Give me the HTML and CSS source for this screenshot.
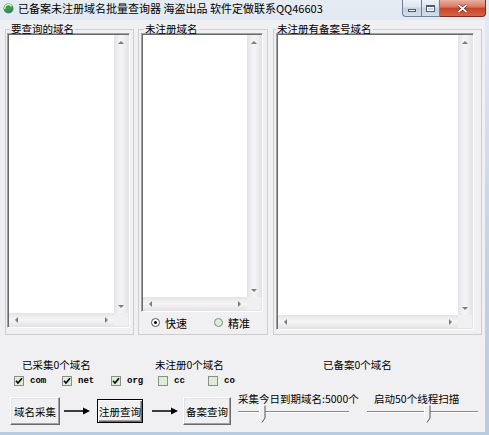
FILE: index.html
```html
<!DOCTYPE html>
<html lang="zh">
<head>
<meta charset="utf-8">
<title>已备案未注册域名批量查询器</title>
<link rel="stylesheet" href="styles.css">
</head>
<body>
<div class="window">
  <div class="titlebar">
    <svg class="app-icon" width="11" height="11" viewBox="0 0 11 11">
      <circle cx="5.5" cy="5.5" r="5" fill="#3f9b3a"/>
      <path d="M2 6 A3.5 3.5 0 0 1 8.5 3.5" stroke="#d8f0c8" stroke-width="1.4" fill="none"/>
      <path d="M9 5.5 A3.5 3.5 0 0 1 3 8.2" stroke="#3a6fc0" stroke-width="1.4" fill="none"/>
    </svg>
    <span class="title">已备案未注册域名批量查询器 海盗出品 软件定做联系QQ46603</span>
    <div class="caption">
      <div class="cap-btn cap-min"><span class="glyph-min"></span></div>
      <div class="cap-btn cap-max"><span class="glyph-max"></span></div>
      <div class="cap-btn cap-close">
        <svg width="11" height="9" viewBox="0 0 11 9"><path d="M1.5 1 L9.5 8 M9.5 1 L1.5 8" stroke="#5a1a10" stroke-width="3"/><path d="M1.5 1 L9.5 8 M9.5 1 L1.5 8" stroke="#fff" stroke-width="1.7"/></svg>
      </div>
    </div>
  </div>

  <div class="client">
    <div class="groups">
      <fieldset class="group g1">
        <legend>要查询的域名</legend>
        <div class="listbox lb1">
          <div class="lb-area"></div>
          <div class="vscroll"><span class="arr arr-up"></span><span class="arr arr-down"></span></div>
          <div class="hscroll"><span class="arr arr-left"></span><span class="arr arr-right"></span></div>
          <div class="corner"></div>
        </div>
      </fieldset>

      <fieldset class="group g2">
        <legend>未注册域名</legend>
        <div class="listbox lb2">
          <div class="lb-area"></div>
          <div class="vscroll"><span class="arr arr-up"></span><span class="arr arr-down"></span></div>
          <div class="hscroll"><span class="arr arr-left"></span><span class="arr arr-right"></span></div>
          <div class="corner"></div>
        </div>
        <div class="radios">
          <label class="radio-item"><span class="radio checked"></span><span>快速</span></label>
          <label class="radio-item"><span class="radio"></span><span>精准</span></label>
        </div>
      </fieldset>

      <fieldset class="group g3">
        <legend>未注册有备案号域名</legend>
        <div class="listbox lb3">
          <div class="lb-area"></div>
          <div class="vscroll"><span class="arr arr-up"></span><span class="arr arr-down"></span></div>
          <div class="hscroll"><span class="arr arr-left"></span><span class="arr arr-right"></span></div>
          <div class="corner"></div>
        </div>
      </fieldset>
    </div>

    <div class="stats">
      <span class="stat s1">已采集0个域名</span>
      <span class="stat s2">未注册0个域名</span>
      <span class="stat">已备案0个域名</span>
    </div>

    <div class="checks">
      <label class="check"><span class="box"><svg width="8" height="8" viewBox="0 0 8 8"><path d="M1 3.8 L3 6 L7 1.2" stroke="#000" stroke-width="1.6" fill="none"/></svg></span><span class="tld">com</span></label>
      <label class="check"><span class="box"><svg width="8" height="8" viewBox="0 0 8 8"><path d="M1 3.8 L3 6 L7 1.2" stroke="#000" stroke-width="1.6" fill="none"/></svg></span><span class="tld">net</span></label>
      <label class="check"><span class="box"><svg width="8" height="8" viewBox="0 0 8 8"><path d="M1 3.8 L3 6 L7 1.2" stroke="#000" stroke-width="1.6" fill="none"/></svg></span><span class="tld">org</span></label>
      <label class="check"><span class="box"></span><span class="tld">cc</span></label>
      <label class="check"><span class="box"></span><span class="tld">co</span></label>
    </div>

    <div class="actions">
      <div class="btn btn-1">域名采集</div>
      <svg class="flow-arrow fa-1" width="26" height="8" viewBox="0 0 26 8"><path d="M0 4 H20" stroke="#000" stroke-width="1.5"/><path d="M19 0.5 L26 4 L19 7.5 Z" fill="#000"/></svg>
      <div class="btn btn-2 default">注册查询</div>
      <svg class="flow-arrow fa-2" width="26" height="8" viewBox="0 0 26 8"><path d="M0 4 H20" stroke="#000" stroke-width="1.5"/><path d="M19 0.5 L26 4 L19 7.5 Z" fill="#000"/></svg>
      <div class="btn btn-3">备案查询</div>

      <div class="slider sl-1">
        <span class="slider-label">采集今日到期域名:5000个</span>
        <div class="track">
          <svg class="thumb th-1" width="7" height="18" viewBox="0 0 7 18"><path d="M0.5 0.5 H6 V13 L3.5 17.5 L0.5 13 Z" fill="#f0f0f0"/><path d="M0.5 13 V0.5 H6" stroke="#fff" fill="none"/><path d="M6 0.5 V13 L3 17.5" stroke="#555" fill="none"/></svg>
        </div>
      </div>
      <div class="slider sl-2">
        <span class="slider-label">启动50个线程扫描</span>
        <div class="track">
          <svg class="thumb th-2" width="7" height="18" viewBox="0 0 7 18"><path d="M0.5 0.5 H6 V13 L3.5 17.5 L0.5 13 Z" fill="#f0f0f0"/><path d="M0.5 13 V0.5 H6" stroke="#fff" fill="none"/><path d="M6 0.5 V13 L3 17.5" stroke="#555" fill="none"/></svg>
        </div>
      </div>
    </div>
  </div>
</div>
</body>
</html>
```

FILE: styles.css
```css
* { box-sizing: border-box; }

html, body {
  margin: 0;
  padding: 0;
}

body {
  width: 489px;
  height: 435px;
  overflow: hidden;
  font-family: "Noto Sans CJK SC", "Liberation Sans", sans-serif;
  font-size: 10.5px;
  color: #000;
  background: #c6d5e5;
}

.window {
  width: 489px;
  height: 435px;
  display: flex;
  flex-direction: column;
  background: linear-gradient(#e4ebf3, #c3d3e4 60%, #b9cbde);
}

/* ---------- title bar ---------- */
.titlebar {
  height: 20px;
  display: flex;
  align-items: flex-start;
  flex-shrink: 0;
}

.app-icon {
  margin: 3px 0 0 3px;
  flex-shrink: 0;
}

.title {
  margin-left: 4px;
  font-size: 11px;
  line-height: 17px;
  white-space: nowrap;
}

.caption {
  margin-left: auto;
  margin-right: 3px;
  display: flex;
}

.cap-btn {
  height: 17px;
  display: flex;
  align-items: center;
  justify-content: center;
  border: 1px solid #6f819a;
  border-top: none;
}

.cap-min {
  width: 19px;
  border-radius: 0 0 0 4px;
  background: linear-gradient(#eef2f7, #dbe3ed 45%, #c5d1df 50%, #d4deea);
  border-right: none;
}

.cap-max {
  width: 19px;
  background: linear-gradient(#eef2f7, #dbe3ed 45%, #c5d1df 50%, #d4deea);
}

.cap-close {
  width: 46px;
  border-left: none;
  border-radius: 0 0 4px 0;
  border-color: #7a2c1e;
  background: linear-gradient(#eab0a2, #d9775f 45%, #c7432a 50%, #d56445);
}

.glyph-min {
  width: 8px;
  height: 3px;
  margin-top: 5px;
  background: #fff;
  border: 1px solid #4b5b72;
}

.glyph-max {
  width: 9px;
  height: 7px;
  border: 1px solid #4b5b72;
  border-top-width: 2px;
  background: transparent;
  box-shadow: inset 0 0 0 1px #fff;
}

/* ---------- client area ---------- */
.client {
  flex: 1;
  margin: 0 4px 3px 0;
  background: #f0eff1;
  padding-top: 5px;
  display: flex;
  flex-direction: column;
}

.groups {
  display: flex;
  align-items: flex-start;
  padding-left: 5px;
}

.group {
  margin: 0;
  min-width: 0;
  height: 310px;
  border: 1px solid #cfcdd1;
  padding: 0 3px 5px 1px;
}

.group legend {
  padding: 0 1px;
  margin-left: 3px;
  line-height: 8px;
  font-size: 10.5px;
  white-space: nowrap;
}

.g1 { width: 129px; }

.g2 {
  width: 130px;
  margin-left: 4px;
  padding-left: 2px;
}

.g3 {
  width: 209px;
  margin-left: 5px;
  padding-left: 2px;
}

.g3 legend { margin-left: 0; }

/* ---------- list boxes ---------- */
.listbox {
  display: grid;
  grid-template-columns: 1fr 14px;
  grid-template-rows: 1fr 13px;
  border: 1px solid;
  border-color: #a0a0a0 #ffffff #ffffff #a0a0a0;
  box-shadow: inset 1px 1px 0 #6a6a6a, inset -1px -1px 0 #e3e3e3;
  padding: 1px;
  background: #fff;
}

.lb1 { width: 123px; height: 295px; }
.lb2 { width: 122px; height: 279px; }
.lb3 { width: 198px; height: 297px; }

.lb-area { background: #fff; }

.vscroll {
  display: flex;
  flex-direction: column;
  justify-content: space-between;
  align-items: center;
  padding: 6px 0 5px;
  background: linear-gradient(90deg, #e5e3e7, #f4f3f5 45%, #f4f3f5 55%, #e5e3e7);
}

.hscroll {
  display: flex;
  justify-content: space-between;
  align-items: center;
  padding: 0 6px;
  background: linear-gradient(#e5e3e7, #f4f3f5 45%, #f4f3f5 55%, #e5e3e7);
}

.corner { background: #f0eff1; }

.arr {
  width: 0;
  height: 0;
  display: block;
}

.arr-up {
  border-left: 3px solid transparent;
  border-right: 3px solid transparent;
  border-bottom: 3px solid #7d7d7d;
}

.arr-down {
  border-left: 3px solid transparent;
  border-right: 3px solid transparent;
  border-top: 3px solid #7d7d7d;
}

.arr-left {
  border-top: 3px solid transparent;
  border-bottom: 3px solid transparent;
  border-right: 3px solid #7d7d7d;
}

.arr-right {
  border-top: 3px solid transparent;
  border-bottom: 3px solid transparent;
  border-left: 3px solid #7d7d7d;
}

/* ---------- radios ---------- */
.radios {
  height: 21px;
  display: flex;
  align-items: center;
  padding-left: 10px;
}

.radio-item {
  display: flex;
  align-items: center;
  font-size: 11px;
  line-height: 12px;
}

.radio-item + .radio-item { margin-left: 27px; }

.radio {
  width: 9px;
  height: 9px;
  border-radius: 50%;
  border: 1px solid #7f8a80;
  background: #dcefd6;
  margin-right: 5px;
  display: flex;
  align-items: center;
  justify-content: center;
}

.radio.checked {
  background: #fff;
  border-color: #555;
}

.radio.checked::after {
  content: "";
  width: 3px;
  height: 3px;
  border-radius: 50%;
  background: #000;
}

/* ---------- stats ---------- */
.stats {
  margin-top: 24px;
  padding-left: 22px;
  display: flex;
  line-height: 12px;
  white-space: nowrap;
}

.s1 { width: 133px; }
.s2 { width: 168px; }

/* ---------- checkboxes ---------- */
.checks {
  margin-top: 5px;
  padding-left: 14px;
  display: grid;
  grid-template-columns: 48px 49px 47px 50px auto;
  height: 10px;
}

.check {
  display: flex;
  align-items: center;
}

.box {
  width: 10px;
  height: 10px;
  border: 1px solid #8a8f8a;
  background: #dcefd6;
  display: flex;
  align-items: center;
  justify-content: center;
}

.tld {
  margin-left: 6px;
  font-family: "Liberation Mono", "DejaVu Sans Mono", monospace;
  font-size: 9px;
  font-weight: bold;
  line-height: 10px;
}

/* ---------- actions ---------- */
.actions {
  margin-top: 7px;
  padding-left: 10px;
  display: flex;
  align-items: flex-start;
}

.btn {
  display: flex;
  align-items: center;
  justify-content: center;
  background: #f0eff1;
  border: 1px solid;
  border-color: #ffffff #6a6a6a #6a6a6a #ffffff;
  box-shadow: inset -1px -1px 0 #a0a0a0, inset 1px 1px 0 #e3e3e3;
  font-size: 10.5px;
  white-space: nowrap;
}

.btn-1 { width: 50px; height: 28px; margin-top: 4px; }
.btn-2 { width: 46px; height: 24px; margin-top: 6px; margin-left: 7px; }
.btn-3 { width: 48px; height: 28px; margin-top: 4px; margin-left: 5px; }

.btn.default {
  border: 1px solid #000;
  box-shadow: inset 1px 1px 0 #fff, inset -1px -1px 0 #6a6a6a, inset -2px -2px 0 #a0a0a0;
}

.flow-arrow { margin-top: 14px; flex-shrink: 0; }
.fa-1 { margin-left: 4px; }
.fa-2 { margin-left: 9px; }

.slider {
  width: 111px;
  display: flex;
  flex-direction: column;
}

.sl-1 { margin-left: 7px; }
.sl-2 { margin-left: 18px; }

.slider-label {
  line-height: 12px;
  white-space: nowrap;
}

.sl-2 .slider-label { padding-left: 7px; }

.track {
  position: relative;
  height: 18px;
}

.track::before {
  content: "";
  position: absolute;
  left: 0;
  right: 0;
  top: 6px;
  height: 1px;
  background: #8a8a8a;
  box-shadow: 0 1px 0 #fff;
}

.thumb {
  position: absolute;
  top: 0;
}

.th-1 { left: 21px; }
.th-2 { left: 57px; }
```
